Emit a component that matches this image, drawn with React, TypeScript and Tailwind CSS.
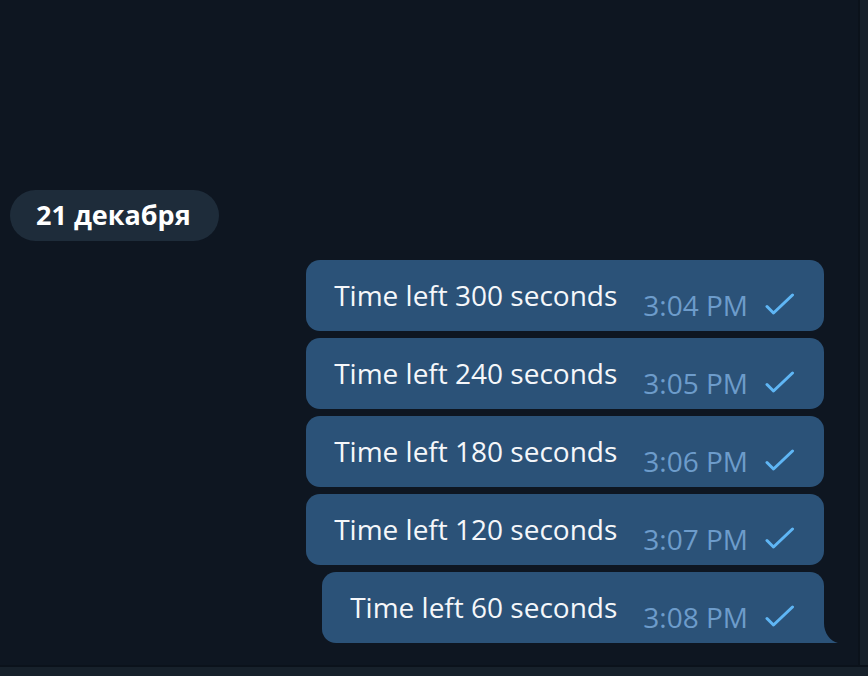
import React from "react";

const messages = [
  { text: "Time left 300 seconds", time: "3:04 PM" },
  { text: "Time left 240 seconds", time: "3:05 PM" },
  { text: "Time left 180 seconds", time: "3:06 PM" },
  { text: "Time left 120 seconds", time: "3:07 PM" },
  { text: "Time left 60 seconds", time: "3:08 PM" },
];

function Check() {
  return (
    <svg width="30" height="22" viewBox="0 0 30 22" fill="none" className="shrink-0">
      <path d="M2 13.5 L8.5 20 L27.5 2" stroke="#5fb6f5" strokeWidth="3" strokeLinecap="round" strokeLinejoin="round" />
    </svg>
  );
}

function Bubble({ text, time, last }: { text: string; time: string; last?: boolean }) {
  return (
    <div className="relative flex">
      <div
        className={`flex h-[71px] items-start bg-[#2b5278] pl-[28px] pr-[29px] ${
          last ? "rounded-l-[14px] rounded-tr-[14px]" : "rounded-[14px]"
        }`}
      >
        <span className="mt-[15px] text-[28px] leading-[40px] text-[#f5f7fa]">{text}</span>
        <span className="mt-[25px] ml-[26px] text-[28px] leading-[40px] text-[#6d9ccb]">{time}</span>
        <span className="mt-[33px] ml-[17px]">
          <Check />
        </span>
      </div>
      {last && (
        <svg width="14" height="20" viewBox="0 0 14 20" className="absolute bottom-0 right-[-14px]">
          <path d="M0 0 C0 10 6 18 14 20 L0 20 Z" fill="#2b5278" />
        </svg>
      )}
    </div>
  );
}

export default function App() {
  return (
    <div
      className="flex h-[676px] w-[868px] flex-col overflow-hidden bg-[#0e1621]"
      style={{ fontFamily: '"Open Sans", "Noto Sans", sans-serif' }}
    >
      <div className="flex flex-1">
        <div className="flex w-[860px] flex-col border-r-2 border-[#0b121b] pt-[190px]">
          <div className="ml-[10px] flex h-[51px] items-center self-start rounded-full bg-[#1e2c3a] pl-[26px] pr-[28px]">
            <span className="text-[27px] font-bold text-white">21 декабря</span>
          </div>
          <div className="mt-[19px] mr-[34px] flex flex-col items-end gap-[7px]">
            {messages.map((m, i) => (
              <Bubble key={m.time} text={m.text} time={m.time} last={i === messages.length - 1} />
            ))}
          </div>
        </div>
        <div className="flex-1 bg-[#17212b]" />
      </div>
      <div className="h-[11px] border-t-2 border-[#0b121b] bg-[#17212b]" />
    </div>
  );
}
